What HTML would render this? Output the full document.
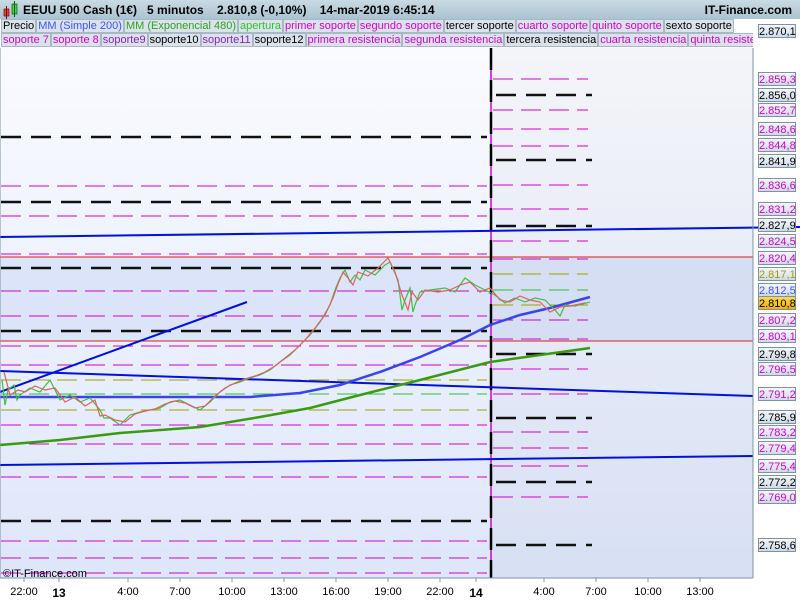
<!DOCTYPE html>
<html><head><meta charset="utf-8"><style>
html,body{margin:0;padding:0;width:800px;height:600px;overflow:hidden;background:#fff;font-family:"Liberation Sans",sans-serif}
#hdr{position:absolute;left:0;top:0;width:800px;height:19px;background:linear-gradient(#c9dbe4,#aac3d1);font-size:12px;font-weight:bold;color:#000}
.lg{position:absolute;height:14px;font-size:11px;line-height:14px;white-space:nowrap}
.lg span{display:inline-block;background:#dbe3ea;border:1px solid #a8b8c4;padding:0 1px;margin-right:0;height:12px;line-height:12px}
.lbl{position:absolute;left:758px;width:38px;height:14px;font-size:11px;line-height:14px;text-align:center;background:linear-gradient(#f4f7fb,#cfdae6);border:1px solid #7d93a3;box-sizing:border-box;color:#d000d0}
.t{position:absolute;top:586px;font-size:11px;transform:translateX(-50%)}
</style></head><body>
<svg width="800" height="600" style="position:absolute;left:0;top:0">
<defs><linearGradient id="bg" x1="0" y1="0" x2="0" y2="1"><stop offset="0" stop-color="#fafbff"/><stop offset="1" stop-color="#dde6fa"/></linearGradient></defs>
<rect x="0" y="48" width="753" height="530" fill="url(#bg)"/>
<rect x="0" y="257" width="753" height="84" fill="#dbe4f9"/>
<rect x="491" y="48" width="262" height="530" fill="#000" opacity="0.025"/>
<line x1="0" y1="257" x2="753" y2="257" stroke="#d02020"/>
<line x1="0" y1="341" x2="753" y2="341" stroke="#d02020"/>
<g stroke-width="2.5" stroke="#111" stroke-dasharray="20,10">
<line x1="1" y1="137" x2="487" y2="137"/><line x1="1" y1="202" x2="487" y2="202"/><line x1="1" y1="268" x2="487" y2="268"/><line x1="1" y1="331" x2="487" y2="331"/><line x1="1" y1="521" x2="487" y2="521"/>
<line x1="496" y1="95" x2="592" y2="95"/><line x1="496" y1="160" x2="592" y2="160"/><line x1="496" y1="226" x2="592" y2="226"/><line x1="496" y1="354" x2="592" y2="354"/><line x1="496" y1="418" x2="592" y2="418"/><line x1="496" y1="482" x2="592" y2="482"/><line x1="496" y1="545" x2="592" y2="545"/>
</g>
<g stroke-width="1" stroke="#d000d0" stroke-dasharray="20,8">
<line x1="1" y1="186" x2="487" y2="186"/><line x1="1" y1="216" x2="487" y2="216"/><line x1="1" y1="254" x2="487" y2="254"/><line x1="1" y1="291" x2="487" y2="291"/><line x1="1" y1="316" x2="487" y2="316"/><line x1="1" y1="346" x2="487" y2="346"/><line x1="1" y1="365" x2="487" y2="365"/><line x1="1" y1="425" x2="487" y2="425"/><line x1="1" y1="444" x2="487" y2="444"/><line x1="1" y1="477" x2="487" y2="477"/><line x1="1" y1="541" x2="487" y2="541"/><line x1="1" y1="558" x2="487" y2="558"/><line x1="1" y1="573" x2="487" y2="573"/>
<line x1="493" y1="79" x2="588" y2="79"/><line x1="493" y1="110" x2="588" y2="110"/><line x1="493" y1="129" x2="588" y2="129"/><line x1="493" y1="146" x2="588" y2="146"/><line x1="493" y1="185" x2="588" y2="185"/><line x1="493" y1="209" x2="588" y2="209"/><line x1="493" y1="241" x2="588" y2="241"/><line x1="493" y1="259" x2="588" y2="259"/><line x1="493" y1="320" x2="588" y2="320"/><line x1="493" y1="339" x2="588" y2="339"/><line x1="493" y1="369" x2="588" y2="369"/><line x1="493" y1="394" x2="588" y2="394"/><line x1="493" y1="432" x2="588" y2="432"/><line x1="493" y1="448" x2="588" y2="448"/><line x1="493" y1="466" x2="588" y2="466"/><line x1="493" y1="497" x2="588" y2="497"/>
</g>
<g stroke-width="1" stroke="#a0a000" stroke-dasharray="20,8">
<line x1="1" y1="380" x2="487" y2="380"/><line x1="1" y1="410" x2="487" y2="410"/><line x1="493" y1="274" x2="588" y2="274"/><line x1="493" y1="305" x2="588" y2="305"/>
</g>
<g stroke-width="1" stroke="#30c030" stroke-dasharray="20,8">
<line x1="1" y1="394" x2="487" y2="394"/><line x1="493" y1="290" x2="588" y2="290"/>
</g>
<line x1="491" y1="48" x2="491" y2="578" stroke="#d000d0" stroke-width="1.5"/>
<line x1="491" y1="48" x2="491" y2="578" stroke="#000" stroke-width="2.5" stroke-dasharray="22,10"/>
<g stroke="#0010e0" stroke-width="2" fill="none">
<line x1="0" y1="237" x2="800" y2="227"/>
<line x1="0" y1="371" x2="753" y2="396"/>
<line x1="0" y1="465" x2="753" y2="456"/>
<line x1="0" y1="392" x2="247" y2="302"/>
</g>
<polyline fill="none" stroke="#3a44ee" stroke-width="2.5" points="0,397 100,397 250,397 300,393 340,385 380,372 420,357 460,340 490,325 520,315 550,308 590,297"/>
<polyline fill="none" stroke="#3a9a10" stroke-width="2.5" points="0,445 60,440 120,433 200,427 260,417 310,408 360,395 420,380 490,362 540,355 590,348"/>
<g fill="none" stroke-width="1.2">
<polyline stroke="#40c040" points="2,380 5,405 8,390 14,385 17,400 20,395 30,388 40,392 50,380 60,400 70,395 80,402 90,398 100,410 104,418 110,418 120,425 130,415 140,412 150,410 160,408 170,402 180,400 190,405 200,410 210,402 220,392 230,385 240,382 250,378 260,375 270,370 280,362 290,355 300,345 310,335 320,322 330,305 335,290 340,278 345,270 350,282 355,275 360,280 365,270 375,275 385,265 390,262 398,280 402,310 405,300 410,288 413,312 415,305 420,292 430,290 445,288 455,292 465,278 475,285 485,290 495,295 505,303 515,298 525,302 535,298 545,300 555,310 560,316 565,305 575,306 590,302"/>
<polyline stroke="#e06060" points="4,372 10,395 18,390 25,392 35,386 45,390 55,388 65,402 75,397 85,406 95,400 100,416 105,415 115,420 125,422 135,414 145,411 155,409 165,404 175,401 185,403 195,408 205,406 215,396 225,388 235,383 245,379 255,376 265,372 275,366 285,358 295,350 305,340 315,328 325,315 333,298 338,284 343,272 348,278 353,285 358,272 368,276 378,268 388,258 395,272 402,295 408,310 412,292 418,300 425,290 438,292 450,290 460,285 470,282 480,292 490,288 500,300 510,302 520,296 530,300 540,302 550,312 560,307 570,306 585,303"/>
</g>
<line x1="753" y1="48" x2="753" y2="578" stroke="#7d93a3"/>
<line x1="0" y1="578" x2="753" y2="578" stroke="#7d93a3"/>
<line x1="0" y1="48" x2="0" y2="578" stroke="#7d93a3"/>
<g stroke="#7d93a3"><line x1="24" y1="578" x2="24" y2="582"/><line x1="59" y1="578" x2="59" y2="582"/><line x1="128" y1="578" x2="128" y2="582"/><line x1="180" y1="578" x2="180" y2="582"/><line x1="232" y1="578" x2="232" y2="582"/><line x1="284" y1="578" x2="284" y2="582"/><line x1="336" y1="578" x2="336" y2="582"/><line x1="388" y1="578" x2="388" y2="582"/><line x1="440" y1="578" x2="440" y2="582"/><line x1="476" y1="578" x2="476" y2="582"/><line x1="544" y1="578" x2="544" y2="582"/><line x1="596" y1="578" x2="596" y2="582"/><line x1="648" y1="578" x2="648" y2="582"/><line x1="700" y1="578" x2="700" y2="582"/></g>
<text x="3" y="577" font-size="11" font-family="Liberation Sans">©IT-Finance.com</text>
</svg>
<div id="hdr"><svg width="18" height="19" style="position:absolute;left:3px;top:1px"><rect x="1" y="8" width="5" height="7" fill="#e04040" stroke="#800" stroke-width=".7"/><line x1="3.5" y1="5" x2="3.5" y2="18" stroke="#800"/><rect x="9" y="3" width="5" height="10" fill="#40d040" stroke="#060" stroke-width=".7"/><line x1="11.5" y1="0" x2="11.5" y2="16" stroke="#060"/></svg>
<span style="position:absolute;left:23px;top:3px">EEUU 500 Cash (1€)&nbsp;&nbsp; 5 minutos&nbsp;&nbsp;&nbsp; 2.810,8 (-0,10%)&nbsp;&nbsp;&nbsp; 14-mar-2019 6:45:14</span>
<span style="position:absolute;right:8px;top:3px">IT-Finance.com</span></div>
<div style="position:absolute;left:0;top:19px;width:753px;height:29px;background:#fff"></div>
<div class="lg" style="left:1px;top:19px"><span>Precio</span><span style="color:#4050ff">MM (Simple 200)</span><span style="color:#30a020">MM (Exponencial 480)</span><span style="color:#30c030">apertura</span><span style="color:#d000d0">primer soporte</span><span style="color:#d000d0">segundo soporte</span><span>tercer soporte</span><span style="color:#d000d0">cuarto soporte</span><span style="color:#d000d0">quinto soporte</span><span>sexto soporte</span></div>
<div class="lg" style="left:1px;top:33px;width:752px;overflow:hidden"><span style="color:#d000d0">soporte 7</span><span style="color:#d000d0">soporte 8</span><span style="color:#9020c0">soporte9</span><span>soporte10</span><span style="color:#9020c0">soporte11</span><span>soporte12</span><span style="color:#d000d0">primera resistencia</span><span style="color:#d000d0">segunda resistencia</span><span>tercera resistencia</span><span style="color:#d000d0">cuarta resistencia</span><span style="color:#d000d0">quinta resistencia</span></div>
<div class="lbl" style="top:24px;color:#000">2.870,1</div>
<div class="lbl" style="top:72px">2.859,3</div>
<div class="lbl" style="top:88px;color:#000">2.856,0</div>
<div class="lbl" style="top:103px">2.852,7</div>
<div class="lbl" style="top:122px">2.848,6</div>
<div class="lbl" style="top:138px">2.844,8</div>
<div class="lbl" style="top:154px;color:#000">2.841,9</div>
<div class="lbl" style="top:178px">2.836,6</div>
<div class="lbl" style="top:202px">2.831,2</div>
<div class="lbl" style="top:218px;color:#000">2.827,9</div>
<div class="lbl" style="top:234px">2.824,5</div>
<div class="lbl" style="top:251px">2.820,4</div>
<div class="lbl" style="top:267px;color:#a0a000">2.817,1</div>
<div class="lbl" style="top:283px;color:#4050ff">2.812,5</div>
<div class="lbl" style="top:296px;color:#000;background:linear-gradient(#ffd84a,#f0b000)">2.810,8</div>
<div class="lbl" style="top:313px">2.807,2</div>
<div class="lbl" style="top:329px">2.803,1</div>
<div class="lbl" style="top:347px;color:#000">2.799,8</div>
<div class="lbl" style="top:362px">2.796,5</div>
<div class="lbl" style="top:387px">2.791,2</div>
<div class="lbl" style="top:410px;color:#000">2.785,9</div>
<div class="lbl" style="top:425px">2.783,2</div>
<div class="lbl" style="top:441px">2.779,4</div>
<div class="lbl" style="top:459px">2.775,4</div>
<div class="lbl" style="top:475px;color:#000">2.772,2</div>
<div class="lbl" style="top:490px">2.769,0</div>
<div class="lbl" style="top:538px;color:#000">2.758,6</div>
<div class="t" style="left:24px">22:00</div><div class="t" style="left:59px;font-weight:bold;font-size:12px">13</div><div class="t" style="left:128px">4:00</div><div class="t" style="left:180px">7:00</div><div class="t" style="left:232px">10:00</div><div class="t" style="left:284px">13:00</div><div class="t" style="left:336px">16:00</div><div class="t" style="left:388px">19:00</div><div class="t" style="left:440px">22:00</div><div class="t" style="left:476px;font-weight:bold;font-size:12px">14</div><div class="t" style="left:544px">4:00</div><div class="t" style="left:596px">7:00</div><div class="t" style="left:648px">10:00</div><div class="t" style="left:700px">13:00</div>
</body></html>
